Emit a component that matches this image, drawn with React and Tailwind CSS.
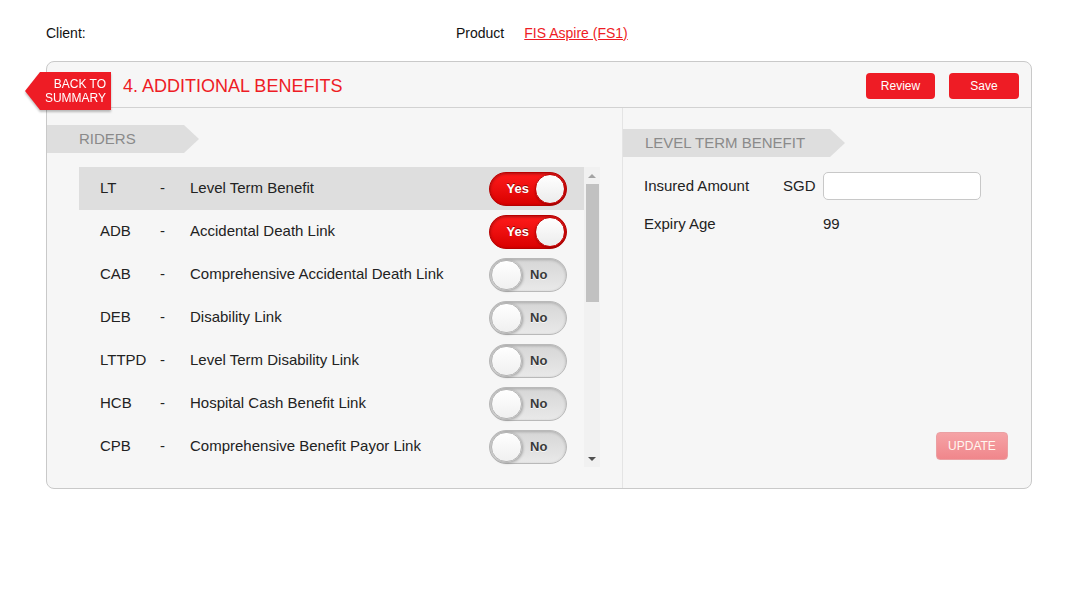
import React from "react";

const riders = [
  { code: "LT", name: "Level Term Benefit", on: true, active: true },
  { code: "ADB", name: "Accidental Death Link", on: true },
  { code: "CAB", name: "Comprehensive Accidental Death Link", on: false },
  { code: "DEB", name: "Disability Link", on: false },
  { code: "LTTPD", name: "Level Term Disability Link", on: false },
  { code: "HCB", name: "Hospital Cash Benefit Link", on: false },
  { code: "CPB", name: "Comprehensive Benefit Payor Link", on: false },
];

function Toggle({ on }) {
  if (on) {
    return (
      <div className="flex items-center justify-end w-[78px] h-[34px] rounded-full border border-[#b80000] bg-gradient-to-b from-[#ff1a1a] to-[#d90000] shadow-[inset_0_1px_3px_rgba(0,0,0,0.35)] pr-[1px]">
        <span className="mr-[6px] text-[13px] font-bold text-white [text-shadow:0_-1px_0_rgba(0,0,0,0.45)]">Yes</span>
        <div className="w-[30px] h-[30px] rounded-full bg-gradient-to-b from-white to-[#ececec] border border-[#c30000] shadow-[0_1px_2px_rgba(0,0,0,0.3)]" />
      </div>
    );
  }
  return (
    <div className="flex items-center w-[78px] h-[34px] rounded-full border border-[#b9b9b9] bg-gradient-to-b from-[#d6d6d6] to-[#e9e9e9] shadow-[inset_0_1px_3px_rgba(0,0,0,0.2)] pl-[1px]">
      <div className="w-[31px] h-[30px] rounded-full bg-gradient-to-b from-white to-[#f0f0f0] border border-[#b5b5b5] shadow-[1px_1px_3px_rgba(0,0,0,0.3)]" />
      <span className="ml-[8px] text-[13px] font-bold text-[#3a3a3a] [text-shadow:0_1px_0_rgba(255,255,255,0.8)]">No</span>
    </div>
  );
}

export default function App() {
  return (
    <div className="w-[1083px] h-[594px] bg-white text-[#222] font-['Liberation_Sans',Arial,sans-serif]">
      <div className="flex items-center h-[16px] pt-[25px] box-content pl-[46px] text-[14px] leading-[16px] text-[#111]">
        <span className="w-[410px]">Client:</span>
        <span>Product</span>
        <a href="#" className="ml-[20px] text-[#ee1c25] underline">FIS Aspire (FS1)</a>
      </div>

      <div className="relative mt-[20px] ml-[46px] w-[986px] h-[428px] rounded-[8px] border border-[#c9c9c9] bg-[#f6f6f6] flex flex-col">
        <div className="absolute left-[-22px] top-[10px] w-[86px] h-[38px] drop-shadow-[0_2px_1px_rgba(0,0,0,0.25)]">
          <div className="w-full h-full bg-[#ee1c25] [clip-path:polygon(15px_0,100%_0,100%_100%,15px_100%,0_50%)] flex flex-col items-end justify-center pr-[5px] text-[12px] leading-[14px] text-white">
            <span>BACK TO</span>
            <span>SUMMARY</span>
          </div>
        </div>

        <div className="h-[46px] shrink-0 flex items-center border-b border-[#d2d2d2] pl-[76px] pr-[12px]">
          <span className="mt-[3px] text-[18px] text-[#ee1c25]">4. ADDITIONAL BENEFITS</span>
          <div className="ml-auto mt-[2px] flex gap-[14px]">
            <button className="w-[69px] h-[26px] rounded-[4px] bg-[#ee1c25] text-white text-[12px]">Review</button>
            <button className="w-[70px] h-[26px] rounded-[4px] bg-[#ee1c25] text-white text-[12px]">Save</button>
          </div>
        </div>

        <div className="flex flex-1 min-h-0">
          <div className="w-[576px] border-r border-[#e4e4e4] pt-[17px]">
            <div className="w-[152px] h-[28px] bg-[#dedede] [clip-path:polygon(0_0,calc(100%-15px)_0,100%_50%,calc(100%-15px)_100%,0_100%)] flex items-center pl-[32px] text-[15px] text-[#8a8a8a]">
              RIDERS
            </div>
            <div className="mt-[14px] ml-[32px] flex h-[300px]">
              <div className="w-[505px] overflow-hidden">
                {riders.map((r) => (
                  <div key={r.code} className={`flex items-center h-[43px] text-[15px] text-[#222] ${r.active ? "bg-[#dedede]" : ""}`}>
                    <span className="w-[81px] pl-[21px]">{r.code}</span>
                    <span className="w-[30px]">-</span>
                    <span className="flex-1">{r.name}</span>
                    <div className="mr-[17px]">
                      <Toggle on={r.on} />
                    </div>
                  </div>
                ))}
              </div>
              <div className="w-[16px] h-[300px] bg-[#f1f1f1] flex flex-col items-center">
                <div className="h-[17px] flex items-center justify-center">
                  <div className="w-0 h-0 border-l-[4px] border-r-[4px] border-b-[4px] border-l-transparent border-r-transparent border-b-[#a3a3a3]" />
                </div>
                <div className="w-[13px] h-[118px] bg-[#c1c1c1] ml-[1px]" />
                <div className="mt-auto h-[17px] flex items-center justify-center">
                  <div className="w-0 h-0 border-l-[4px] border-r-[4px] border-t-[4px] border-l-transparent border-r-transparent border-t-[#505050]" />
                </div>
              </div>
            </div>
          </div>

          <div className="flex-1 flex flex-col pt-[21px]">
            <div className="w-[222px] h-[28px] bg-[#dedede] [clip-path:polygon(0_0,calc(100%-15px)_0,100%_50%,calc(100%-15px)_100%,0_100%)] flex items-center pl-[22px] text-[15px] text-[#8a8a8a]">
              LEVEL TERM BENEFIT
            </div>
            <div className="pl-[21px] text-[15px] text-[#222]">
              <div className="mt-[15px] flex items-center h-[28px]">
                <span className="w-[139px]">Insured Amount</span>
                <span className="w-[40px]">SGD</span>
                <input className="w-[158px] h-[28px] rounded-[5px] border border-[#c8c8c8] bg-white outline-none" />
              </div>
              <div className="mt-[10px] flex items-center h-[28px]">
                <span className="w-[179px]">Expiry Age</span>
                <span>99</span>
              </div>
            </div>
            <div className="mt-auto flex justify-end pr-[23px] pb-[28px]">
              <button className="w-[72px] h-[28px] rounded-[4px] border border-[#eba0a3] bg-gradient-to-b from-[#f5a3a6] to-[#f0868b] text-[12px] text-[#fff7f0]">UPDATE</button>
            </div>
          </div>
        </div>
      </div>
    </div>
  );
}
